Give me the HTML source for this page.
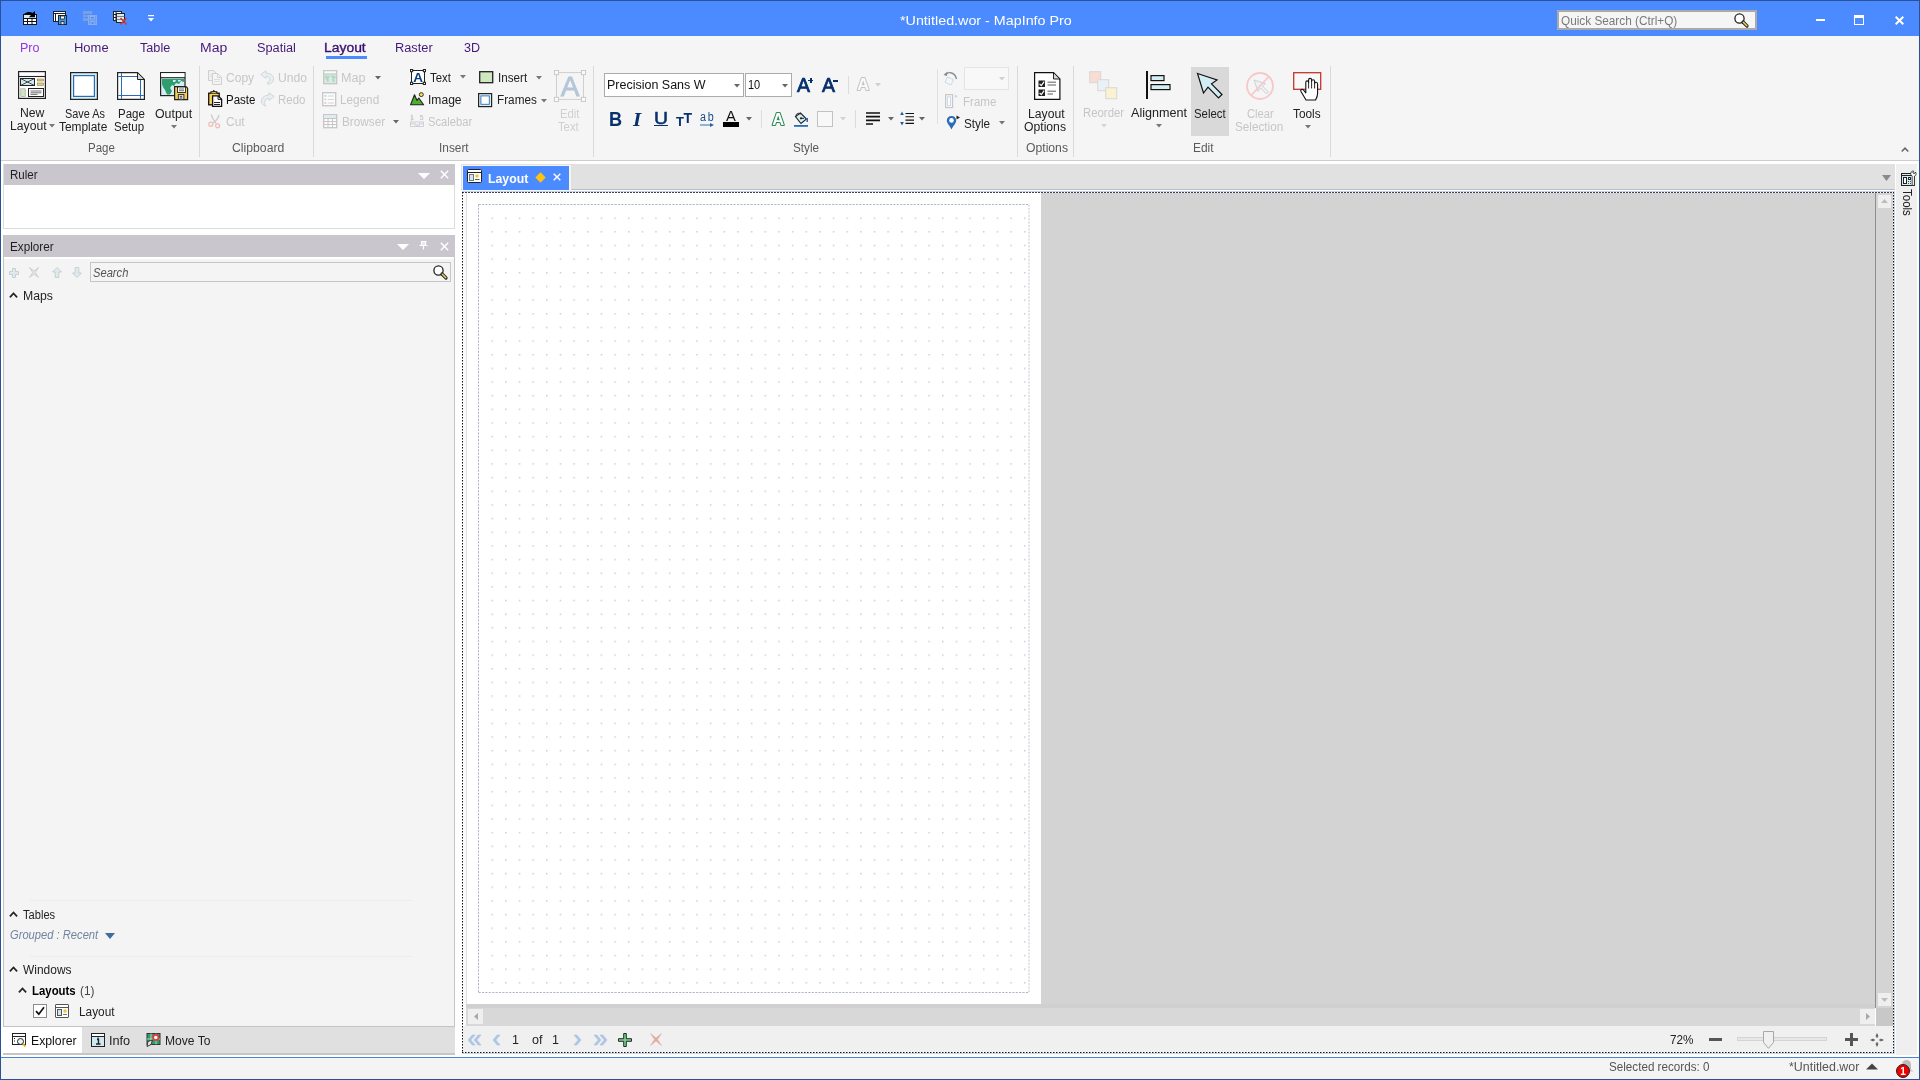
<!DOCTYPE html>
<html><head><meta charset="utf-8"><title>MapInfo Pro</title>
<style>
html,body{margin:0;padding:0;}
body{width:1920px;height:1080px;position:relative;overflow:hidden;background:#fff;font-family:"Liberation Sans",sans-serif;}
#app div,#app span,#app svg{position:absolute;}
#app{position:absolute;left:0;top:0;width:1920px;height:1080px;overflow:hidden;will-change:transform;}
.t{white-space:nowrap;line-height:1;transform-origin:0 0;}
svg{overflow:visible;}
</style></head><body><div id="app">
<div style="left:0px;top:0px;width:1920px;height:1080px;background:#28529a;"></div>
<div style="left:1px;top:1px;width:1918px;height:1078px;background:#ffffff;"></div>
<div style="left:1px;top:1px;width:1918px;height:35px;background:#4c8bff;"></div>
<div style="left:1px;top:36px;width:1918px;height:124px;background:#f5f5f5;"></div>
<div style="left:1px;top:160px;width:1918px;height:1px;background:#cdcdcd;"></div>
<div style="left:1px;top:1057px;width:1918px;height:1px;background:#4a82d4;"></div>
<div style="left:1px;top:1058px;width:1918px;height:21px;background:#f4f4f4;"></div>
<span class="t" style="left:900.29px;top:13.80px;font-size:13px;color:#ffffff;transform:scaleX(1.1007);">*Untitled.wor - MapInfo Pro</span>
<div style="left:1557px;top:10px;width:200px;height:20px;background:#a9a9a9;"></div>
<div style="left:1559px;top:12px;width:196px;height:16px;background:#f5f5f5;"></div>
<span class="t" style="left:1561.47px;top:14.92px;font-size:12.5px;color:#7a7a7a;transform:scaleX(0.9426);">Quick Search (Ctrl+Q)</span>
<div style="left:1816px;top:19px;width:9px;height:2px;background:#ffffff;"></div>
<div style="left:1854px;top:15px;width:10px;height:10px;background:#ffffff;"></div>
<div style="left:1855px;top:18px;width:8px;height:6px;background:#4c8bff;"></div>
<svg style="left:1895px;top:16px;" width="9" height="9" viewBox="0 0 9 9"><path d="M0.7 0.7L8.3 8.3M8.3 0.7L0.7 8.3" stroke="#fff" stroke-width="2" fill="none"/></svg>
<span class="t" style="left:1608.98px;top:1061.42px;font-size:12.5px;color:#555;transform:scaleX(0.9326);">Selected records: 0</span>
<span class="t" style="left:1788.81px;top:1061.42px;font-size:12.5px;color:#555;transform:scaleX(0.9929);">*Untitled.wor</span>
<svg style="left:1866px;top:1063px;" width="12" height="7" viewBox="0 0 12 7"><path d="M0 6.5L6 0.5L12 6.5Z" fill="#444"/></svg>
<svg style="left:1894px;top:1060px;" width="20" height="19" viewBox="0 0 20 19"><path d="M8 9V4.5A4.5 4.5 0 0 1 17 4.5V9Z" fill="#bcbcbc"/><path d="M16 8.5L19.5 11.5H15Z" fill="#c4c4c4"/><circle cx="9" cy="11" r="6.5" fill="#ee0000" stroke="#222" stroke-width="1"/><text x="9" y="15" font-size="10" font-weight="700" fill="#fff" text-anchor="middle" font-family="Liberation Sans">1</text></svg>
<span class="t" style="left:19.50px;top:42.42px;font-size:12.5px;color:#9236e0;transform:scaleX(1.0035);">Pro</span>
<span class="t" style="left:74.46px;top:42.42px;font-size:12.5px;color:#45177c;transform:scaleX(1.0373);">Home</span>
<span class="t" style="left:139.75px;top:42.42px;font-size:12.5px;color:#45177c;transform:scaleX(1.0129);">Table</span>
<span class="t" style="left:200.38px;top:42.42px;font-size:12.5px;color:#45177c;transform:scaleX(1.1178);">Map</span>
<span class="t" style="left:257.43px;top:42.42px;font-size:12.5px;color:#45177c;transform:scaleX(1.0187);">Spatial</span>
<span class="t" style="left:324.39px;top:42.42px;font-size:12.5px;color:#3a0f70;transform:scaleX(1.1115);-webkit-text-stroke:0.35px #3a0f70;">Layout</span>
<div style="left:326px;top:56px;width:41px;height:3px;background:#4c8bff;"></div>
<span class="t" style="left:395.48px;top:42.42px;font-size:12.5px;color:#45177c;transform:scaleX(1.0246);">Raster</span>
<span class="t" style="left:464.06px;top:42.42px;font-size:12.5px;color:#45177c;transform:scaleX(1.0042);">3D</span>
<svg style="left:23px;top:11px;" width="15" height="15" viewBox="0 0 15 15"><rect x="0.5" y="3.5" width="13" height="10" fill="#fff" stroke="#111"/><rect x="1" y="4" width="12" height="3" fill="#d4ecf4"/><path d="M0.5 7.5H13.5M0.5 10.5H13.5M4.5 7.5V13.5M9 7.5V13.5" stroke="#111"/><path d="M1.5 2.6C4 0.6 7.5 0.4 9.6 2L12 0V6.3H5.8L7.8 4.3C6 3 3.8 2.6 1.5 3.4Z" fill="#000"/></svg>
<svg style="left:53px;top:11px;" width="15" height="15" viewBox="0 0 15 15"><rect x="0.5" y="0.5" width="12" height="10" fill="#fff" stroke="#222"/><path d="M0.5 2.5H12.5" stroke="#222"/><rect x="2.5" y="2.5" width="10" height="8" fill="#fff" stroke="#222"/><rect x="5.5" y="4.5" width="8" height="9" fill="#38a0f0" stroke="#222"/><rect x="7.5" y="5" width="4" height="3" fill="#fff" stroke="#222" stroke-width="0.8"/><rect x="8" y="10.5" width="3" height="3" fill="#e8e8e8" stroke="#222" stroke-width="0.8"/></svg>
<svg style="left:83px;top:11px;" width="15" height="15" viewBox="0 0 15 15"><g opacity="0.75"><rect x="0.5" y="0.5" width="8" height="9" fill="#7fa8e8" stroke="#88a8e0"/><path d="M0.5 3.5H8.5M0.5 6.5H8.5" stroke="#5a8ae0"/><rect x="5.5" y="4.5" width="8" height="9" fill="#78a4ec" stroke="#9ab8ec"/><rect x="7.5" y="5.5" width="4" height="2.5" fill="#5a8ae0" stroke="#a8c4f0" stroke-width="0.8"/><rect x="8" y="10.5" width="3" height="3" fill="#5a8ae0" stroke="#a8c4f0" stroke-width="0.8"/></g></svg>
<svg style="left:113px;top:11px;" width="15" height="15" viewBox="0 0 15 15"><rect x="0.5" y="0.5" width="8" height="9" fill="#fff" stroke="#222"/><path d="M0.5 3.5H8.5M0.5 6.5H8.5M3 0.5V9.5" stroke="#222"/><rect x="3.5" y="2.5" width="8" height="9" fill="#d8ecf4" stroke="#222"/><path d="M3.5 5.5H11.5M3.5 8.5H11.5" stroke="#666" stroke-width="0.8"/><path d="M7.5 7L13.5 13.5M13.5 7L7.5 13.5" stroke="#cc3a30" stroke-width="1.5"/></svg>
<svg style="left:147.5px;top:15px;" width="6" height="7" viewBox="0 0 6 7"><rect x="0" y="0" width="6" height="1.2" fill="#fff"/><path d="M0 3H6L3 6.5Z" fill="#fff"/></svg>
<svg style="left:18px;top:71px;" width="28" height="28" viewBox="0 0 28 28"><rect x="0.6" y="0.6" width="26.8" height="26.8" fill="#fff" stroke="#222" stroke-width="1.2"/><path d="M0.6 5.5H27.4" stroke="#222" stroke-width="1.1"/><rect x="2.5" y="7.5" width="14" height="7" fill="#cfeaf2" stroke="#222" stroke-width="1"/><path d="M2.5 7.5L16.5 14.5M16.5 7.5L2.5 14.5" stroke="#222" stroke-width="0.8"/><rect x="19.5" y="8" width="6" height="2" fill="#f4cf50" stroke="#666" stroke-width="0.5"/><rect x="19.5" y="12" width="6" height="2.4" fill="#f4cf50" stroke="#666" stroke-width="0.5"/><rect x="2.8" y="17.8" width="4.4" height="7.6" fill="#d0e8c0" stroke="#999" stroke-width="0.6"/><rect x="10.5" y="17.5" width="15" height="8" fill="#fff" stroke="#222" stroke-width="1"/><path d="M12.5 20H23.5M12.5 21.8H23.5M12.5 23.4H19.5" stroke="#333" stroke-width="0.7"/></svg>
<span class="t" style="left:19.52px;top:107.42px;font-size:12.5px;color:#222;transform:scaleX(0.9766);">New</span>
<span class="t" style="left:9.53px;top:120.42px;font-size:12.5px;color:#222;transform:scaleX(0.9743);">Layout</span>
<svg style="left:49px;top:124px;" width="6" height="3.4" viewBox="0 0 6 3.4"><path d="M0 0H6L3 3.4Z" fill="#777"/></svg>
<svg style="left:70px;top:72px;" width="28" height="28" viewBox="0 0 28 28"><rect x="0.6" y="0.6" width="26.8" height="26.8" fill="#d6eef6" stroke="#222" stroke-width="1.2"/><rect x="3.6" y="3.6" width="20.8" height="20.8" fill="#fff" stroke="#2a6cb8" stroke-width="1.2"/></svg>
<span class="t" style="left:64.51px;top:108.42px;font-size:12.5px;color:#222;transform:scaleX(0.8691);">Save As</span>
<span class="t" style="left:59.26px;top:121.42px;font-size:12.5px;color:#222;transform:scaleX(0.9512);">Template</span>
<svg style="left:117px;top:72px;" width="28" height="28" viewBox="0 0 28 28"><path d="M0.6 0.6H20.5L27.4 7.5V27.4H0.6Z" fill="#fff" stroke="#222" stroke-width="1.2"/><path d="M20.5 0.6V7.5H27.4Z" fill="#d8d8d8" stroke="#222" stroke-width="1"/><path d="M4.5 1.2V26.8M23.5 8V26.8M1.2 4.5H20M1.2 23.5H26.8" stroke="#2a6cb8" stroke-width="1"/></svg>
<span class="t" style="left:117.58px;top:108.42px;font-size:12.5px;color:#222;transform:scaleX(0.9210);">Page</span>
<span class="t" style="left:113.98px;top:121.42px;font-size:12.5px;color:#222;transform:scaleX(0.9188);">Setup</span>
<svg style="left:160px;top:72px;" width="29" height="29" viewBox="0 0 29 29"><rect x="0.6" y="0.6" width="24.4" height="23" fill="#d4ecf2" stroke="#222" stroke-width="1.2"/><rect x="1.2" y="1.2" width="23.2" height="4" fill="#fff"/><path d="M0.6 5.7H25" stroke="#222" stroke-width="1.1"/><path d="M2 7H24V10L21 9L19 12L16 11L14 14L12 13L10 16L12 19L10 22.5H7L5 18L3 15L2 12Z" fill="#2e9e6e"/><path d="M13 8L16 8L15 10L13 10ZM18 8H21L20 9.5H18Z" fill="#d4ecf2"/><path d="M14.6 14.6H26L27.6 16.2V27.6H14.6Z" fill="#f4cf50" stroke="#222" stroke-width="1.2"/><rect x="17.5" y="15" width="8" height="5.5" fill="#fff" stroke="#222" stroke-width="0.9"/><path d="M19 17H24M19 18.7H24" stroke="#333" stroke-width="0.7"/><rect x="18.3" y="22.6" width="5.6" height="5" fill="#e8e8e8" stroke="#222" stroke-width="0.9"/><rect x="20.2" y="24.2" width="1.6" height="3.4" fill="#fff" stroke="#222" stroke-width="0.6"/></svg>
<span class="t" style="left:154.94px;top:108.42px;font-size:12.5px;color:#222;transform:scaleX(0.9898);">Output</span>
<svg style="left:171px;top:125px;" width="6" height="3.4" viewBox="0 0 6 3.4"><path d="M0 0H6L3 3.4Z" fill="#777"/></svg>
<span class="t" style="left:87.58px;top:141.92px;font-size:12.5px;color:#5a5a5a;transform:scaleX(0.9210);">Page</span>
<div style="left:199px;top:66px;width:1px;height:91px;background:#dadada;"></div>
<svg style="left:208px;top:70px;" width="15" height="15" viewBox="0 0 15 15"><g><path d="M0.5 0.5H5.5L8.5 3.5V10.5H0.5Z" fill="#f0f0f0" stroke="#cfcfcf"/><path d="M4.5 3.5H9.5L13.5 7.5V14.5H4.5Z" fill="#f4f4f4" stroke="#cfcfcf"/><g shape-rendering="crispEdges"><rect x="6" y="9" width="6" height="1" fill="#dedede"/><rect x="6" y="11" width="6" height="1" fill="#dedede"/><rect x="2" y="4" width="2" height="1" fill="#dedede"/><rect x="2" y="6" width="2" height="1" fill="#dedede"/></g><path d="M9.5 3.5V7.5H13.5" fill="none" stroke="#cfcfcf" stroke-width="0.8"/></g></svg>
<span class="t" style="left:225.90px;top:71.92px;font-size:12.5px;color:#c6c6c6;transform:scaleX(0.9628);">Copy</span>
<svg style="left:260px;top:70px;" width="15" height="15" viewBox="0 0 15 15"><path d="M0.8 4.5L6 0.8V3.2C11 3.2 14 6 13.5 10C13 12.5 10.5 14 7.5 14.2V12.5C10 11.5 10.5 9.5 9.5 8C8.8 6.8 7.5 6.3 6 6.3V8.5Z" fill="#e6f0f2" stroke="#cfd2d2" stroke-width="0.9"/></svg>
<span class="t" style="left:278.09px;top:71.92px;font-size:12.5px;color:#c6c6c6;transform:scaleX(0.9670);">Undo</span>
<svg style="left:208px;top:90px;" width="15" height="17" viewBox="0 0 15 17"><rect x="0.7" y="3.2" width="10.5" height="11.6" fill="#f4d35e" stroke="#111" stroke-width="1.3"/><path d="M3 3.2V1.8H5L5.8 0.6L6.8 1.8H8.8V3.2" fill="#f4d35e" stroke="#111" stroke-width="1.1"/><path d="M4.6 5.8H10.2L13.6 9.2V16.3H4.6Z" fill="#fff" stroke="#111" stroke-width="1.3"/><path d="M10 6V9.4H13.4" fill="none" stroke="#111" stroke-width="0.9"/><g shape-rendering="crispEdges"><rect x="6" y="12" width="6" height="1" fill="#222"/><rect x="6" y="14" width="6" height="1" fill="#222"/></g></svg>
<span class="t" style="left:225.58px;top:93.92px;font-size:12.5px;color:#111;transform:scaleX(0.9199);">Paste</span>
<svg style="left:260px;top:92px;" width="15" height="15" viewBox="0 0 15 15"><path d="M14.2 4.5L9 0.8V3.2C4 3.2 1 6 1.5 10C2 12.5 4.5 14 6 14.2L5 12.5C4.2 11.2 4.5 9.5 5.5 8C6.2 6.8 7.5 6.3 9 6.3V8.5Z" fill="#e6f0f2" stroke="#cfd2d2" stroke-width="0.9"/></svg>
<span class="t" style="left:278.08px;top:93.92px;font-size:12.5px;color:#c6c6c6;transform:scaleX(0.9163);">Redo</span>
<svg style="left:208px;top:114px;" width="13" height="15" viewBox="0 0 13 15"><path d="M3.2 0.5C4 4 6 7 8.2 9.6M11 1C10.2 4 8 7.5 4.6 9" stroke="#cdcdcd" stroke-width="1.3" fill="none"/><circle cx="2.8" cy="10.2" r="2" fill="#fbf3f3" stroke="#f0baba" stroke-width="1.2"/><circle cx="9.6" cy="11.8" r="2" fill="#fbf3f3" stroke="#f0baba" stroke-width="1.2"/></svg>
<span class="t" style="left:226.40px;top:116.42px;font-size:12.5px;color:#c6c6c6;transform:scaleX(0.9600);">Cut</span>
<span class="t" style="left:231.89px;top:141.92px;font-size:12.5px;color:#5a5a5a;transform:scaleX(0.9784);">Clipboard</span>
<div style="left:313px;top:66px;width:1px;height:91px;background:#dadada;"></div>
<svg style="left:323px;top:70px;" width="15" height="15" viewBox="0 0 15 15"><rect x="0.7" y="0.7" width="13" height="13" fill="#d8ece2" stroke="#c6c6c6" stroke-width="1.3"/><rect x="1.4" y="1.4" width="11.6" height="2" fill="#fafafa"/><path d="M0.7 4H13.7" stroke="#c6c6c6"/><path d="M2 5.5H6L7 7L5.5 8.5L6 11L4.5 12.5L3.5 10L2 8Z M7.5 5.5H12.5V8L11 9.5L12 11.5L10.5 12.5L9 10L9.5 8L8 7Z" fill="#b4d8c4"/></svg>
<span class="t" style="left:341.49px;top:71.92px;font-size:12.5px;color:#c6c6c6;transform:scaleX(1.0082);">Map</span>
<svg style="left:374.5px;top:76px;" width="6" height="3.4" viewBox="0 0 6 3.4"><path d="M0 0H6L3 3.4Z" fill="#666"/></svg>
<svg style="left:322px;top:92px;" width="15" height="15" viewBox="0 0 15 15"><rect x="0.7" y="0.7" width="13" height="13" fill="#fcfcfc" stroke="#c6c6c6" stroke-width="1.3"/><rect x="2.5" y="3" width="1.8" height="1.8" fill="#b8d4f4"/><rect x="2.5" y="6.5" width="1.8" height="1.8" fill="#b8e0c8"/><rect x="2.5" y="10" width="1.8" height="1.8" fill="#f4c0c0"/><path d="M5.8 4H12M5.8 7.5H12M5.8 11H12" stroke="#d0d0d0" stroke-width="0.9"/></svg>
<span class="t" style="left:340.06px;top:93.92px;font-size:12.5px;color:#c6c6c6;transform:scaleX(0.9390);">Legend</span>
<svg style="left:323px;top:114px;" width="15" height="15" viewBox="0 0 15 15"><rect x="0.7" y="0.7" width="13" height="13" fill="#fcfcfc" stroke="#c6c6c6" stroke-width="1.3"/><rect x="1.4" y="1.6" width="11.6" height="2.6" fill="#dcecf0"/><path d="M0.7 4.5H13.7M0.7 7.5H13.7M0.7 10.5H13.7M5 4.5V13.7M9.5 4.5V13.7" stroke="#c6c6c6" stroke-width="1"/></svg>
<span class="t" style="left:341.56px;top:116.42px;font-size:12.5px;color:#c6c6c6;transform:scaleX(0.9399);">Browser</span>
<svg style="left:393px;top:120px;" width="6" height="3.4" viewBox="0 0 6 3.4"><path d="M0 0H6L3 3.4Z" fill="#666"/></svg>
<svg style="left:410px;top:69px;" width="17" height="17" viewBox="0 0 17 17"><rect x="1.5" y="1.5" width="13" height="13" fill="#fff" stroke="#222" stroke-width="1"/><g fill="#fff" stroke="#222" stroke-width="1"><rect x="0.5" y="0.5" width="2.2" height="2.2"/><rect x="13.3" y="0.5" width="2.2" height="2.2"/><rect x="0.5" y="13.3" width="2.2" height="2.2"/><rect x="13.3" y="13.3" width="2.2" height="2.2"/></g><text x="8" y="13.2" font-size="13.5" font-weight="700" font-family="Liberation Sans" fill="#0a3a80" text-anchor="middle">A</text></svg>
<span class="t" style="left:430.27px;top:71.92px;font-size:12.5px;color:#222;transform:scaleX(0.9086);">Text</span>
<svg style="left:460px;top:75px;" width="6" height="3.4" viewBox="0 0 6 3.4"><path d="M0 0H6L3 3.4Z" fill="#777"/></svg>
<svg style="left:410px;top:92px;" width="15" height="14" viewBox="0 0 15 14"><path d="M0.6 12.8L4.5 2.8L7 8.5L8.8 6L13.6 12.8Z" fill="#4caf2e" stroke="#222" stroke-width="1.1" stroke-linejoin="round"/><circle cx="11.3" cy="2.6" r="2" fill="#f8e04c" stroke="#222" stroke-width="0.9"/></svg>
<span class="t" style="left:427.91px;top:93.92px;font-size:12.5px;color:#222;transform:scaleX(0.9660);">Image</span>
<svg style="left:410px;top:114px;" width="15" height="14" viewBox="0 0 15 14"><text x="0" y="6" font-size="7.5" font-family="Liberation Sans" fill="#bdbdbd">1</text><text x="9.5" y="6" font-size="7.5" font-family="Liberation Sans" fill="#bdbdbd">5</text><path d="M1.5 0.5V7" stroke="#d4d4d4"/><rect x="0.5" y="8" width="13" height="4.5" fill="#fcfcfc" stroke="#d0d0d0"/><path d="M0.5 10.2H13.5M5 8V12.5M9.5 8V12.5" stroke="#d0d0d0" stroke-width="0.8"/><rect x="1" y="8.5" width="3.5" height="1.4" fill="#cfe0f4"/><rect x="5.5" y="10.6" width="3.5" height="1.4" fill="#cfe0f4"/><rect x="10" y="8.5" width="3" height="1.4" fill="#cfe0f4"/></svg>
<span class="t" style="left:428.00px;top:116.42px;font-size:12.5px;color:#c6c6c6;transform:scaleX(0.8946);">Scalebar</span>
<svg style="left:479px;top:71px;" width="15" height="13" viewBox="0 0 15 13"><rect x="0.7" y="0.7" width="13" height="11" fill="#d0e8c0" stroke="#222" stroke-width="1.3"/></svg>
<span class="t" style="left:497.95px;top:71.92px;font-size:12.5px;color:#222;transform:scaleX(0.9314);">Insert</span>
<svg style="left:536px;top:76px;" width="6" height="3.4" viewBox="0 0 6 3.4"><path d="M0 0H6L3 3.4Z" fill="#777"/></svg>
<svg style="left:478px;top:93px;" width="15" height="15" viewBox="0 0 15 15"><rect x="0.6" y="0.6" width="13" height="13" fill="#dceff6" stroke="#222" stroke-width="1.2"/><rect x="2.9" y="2.9" width="8.4" height="8.4" fill="#fff" stroke="#2a6cb8" stroke-width="0.9"/></svg>
<span class="t" style="left:497.06px;top:93.92px;font-size:12.5px;color:#222;transform:scaleX(0.9405);">Frames</span>
<svg style="left:541px;top:99px;" width="6" height="3.4" viewBox="0 0 6 3.4"><path d="M0 0H6L3 3.4Z" fill="#777"/></svg>
<svg style="left:554px;top:70px;" width="33" height="33" viewBox="0 0 33 33"><rect x="2.5" y="2.6" width="27" height="26.8" fill="none" stroke="#cfcfcf" stroke-width="1"/><g fill="#fafafa" stroke="#c6c6c6" stroke-width="0.9"><rect x="0.4" y="0.5" width="4.2" height="4.2"/><rect x="27.4" y="0.5" width="4.2" height="4.2"/><rect x="0.4" y="27.3" width="4.2" height="4.2"/><rect x="27.4" y="27.3" width="4.2" height="4.2"/></g><text x="16" y="25.8" font-size="28" font-family="Liberation Sans" fill="#b4c6d8" stroke="#b4c6d8" stroke-width="0.8" text-anchor="middle">A</text></svg>
<span class="t" style="left:559.59px;top:108.42px;font-size:12.5px;color:#d0d0d0;transform:scaleX(0.9052);">Edit</span>
<span class="t" style="left:558.28px;top:121.42px;font-size:12.5px;color:#d0d0d0;transform:scaleX(0.8997);">Text</span>
<span class="t" style="left:439.43px;top:141.92px;font-size:12.5px;color:#5a5a5a;transform:scaleX(0.9480);">Insert</span>
<div style="left:593px;top:66px;width:1px;height:91px;background:#dadada;"></div>
<div style="left:604px;top:73px;width:140px;height:24px;background:#ababab;"></div>
<div style="left:605px;top:74px;width:138px;height:22px;background:#fff;"></div>
<span class="t" style="left:606.50px;top:78.92px;font-size:12.5px;color:#111;transform:scaleX(0.9987);">Precision Sans W</span>
<svg style="left:734px;top:84px;" width="6" height="3.4" viewBox="0 0 6 3.4"><path d="M0 0H6L3 3.4Z" fill="#666"/></svg>
<div style="left:745px;top:73px;width:47px;height:24px;background:#ababab;"></div>
<div style="left:746px;top:74px;width:45px;height:22px;background:#fff;"></div>
<span class="t" style="left:748.17px;top:78.92px;font-size:12.5px;color:#111;transform:scaleX(0.8800);">10</span>
<svg style="left:782px;top:84px;" width="6" height="3.4" viewBox="0 0 6 3.4"><path d="M0 0H6L3 3.4Z" fill="#666"/></svg>
<span class="t" style="left:797px;top:75.89px;font-size:19.5px;color:#07306e;-webkit-text-stroke:0.7px #07306e;">A</span>
<div style="left:808px;top:79.6px;width:5.4px;height:1.7px;background:#07306e;"></div>
<div style="left:809.9px;top:77.7px;width:1.7px;height:5.5px;background:#07306e;"></div>
<span class="t" style="left:822px;top:75.89px;font-size:19.5px;color:#07306e;-webkit-text-stroke:0.7px #07306e;">A</span>
<div style="left:833px;top:80px;width:5.2px;height:1.7px;background:#07306e;"></div>
<div style="left:848px;top:76px;width:1px;height:18px;background:#dcdcdc;"></div>
<svg style="left:855px;top:76px;" width="17" height="17" viewBox="0 0 17 17"><text x="8.3" y="14.3" font-size="16.5" font-weight="700" font-family="Liberation Sans" text-anchor="middle" fill="#fafafa" stroke="#c2c2c2" stroke-width="2" paint-order="stroke" stroke-linejoin="round">A</text></svg>
<svg style="left:875px;top:83px;" width="6" height="3.4" viewBox="0 0 6 3.4"><path d="M0 0H6L3 3.4Z" fill="#cfcfcf"/></svg>
<span class="t" style="left:608.5px;top:110.49px;font-size:19.5px;color:#07306e;font-weight:700;transform:scaleX(0.93);">B</span>
<span class="t" style="left:633.4px;top:110.49px;font-size:19.5px;color:#07306e;font-weight:700;font-style:italic;font-family:'Liberation Serif',serif;transform:scaleX(1.08);">I</span>
<span class="t" style="left:653.5px;top:110.21px;font-size:17px;color:#07306e;transform:scaleX(1.14);-webkit-text-stroke:0.5px #07306e;">U</span>
<div style="left:654px;top:124.5px;width:14px;height:1.7px;background:#07306e;"></div>
<span class="t" style="left:676px;top:115.00px;font-size:13px;color:#07306e;font-weight:700;">T</span>
<span class="t" style="left:683.6px;top:110.75px;font-size:14px;color:#07306e;font-weight:700;">T</span>
<span class="t" style="left:699.8px;top:110.72px;font-size:12.5px;color:#184a8c;letter-spacing:2px;transform:scaleX(0.86);">ab</span>
<svg style="left:700px;top:122.5px;" width="14" height="4" viewBox="0 0 14 4"><path d="M0 2H11" stroke="#2463a8" stroke-width="0.9"/><path d="M10 0L14 2L10 4Z" fill="#2463a8"/></svg>
<span class="t" style="left:725.5px;top:107.88px;font-size:15.5px;color:#111;transform:scaleX(0.95);">A</span>
<div style="left:723px;top:122px;width:16px;height:5px;background:#000;"></div>
<svg style="left:746px;top:117px;" width="6" height="3.4" viewBox="0 0 6 3.4"><path d="M0 0H6L3 3.4Z" fill="#666"/></svg>
<div style="left:761px;top:110px;width:1px;height:18px;background:#dcdcdc;"></div>
<svg style="left:770px;top:111px;" width="17" height="17" viewBox="0 0 17 17"><text x="8.2" y="14.1" font-size="16.5" font-weight="700" font-family="Liberation Sans" text-anchor="middle" fill="#fff" stroke="#2e8b57" stroke-width="2.2" paint-order="stroke" stroke-linejoin="round">A</text></svg>
<svg style="left:794px;top:112px;" width="15" height="15" viewBox="0 0 15 15"><path d="M1.5 4.5L6.5 1L12.5 7L7 11.5Z" fill="#d6eef6" stroke="#222" stroke-width="1.1"/><path d="M2 3.5C2 1.5 5 0.5 6.5 2" fill="none" stroke="#222" stroke-width="1"/><circle cx="7" cy="6.3" r="1.1" fill="#222"/><path d="M7 6.3H10" stroke="#222"/><path d="M12.5 6V10H14V6Z" fill="#2a6cb8"/><rect x="0" y="13" width="14" height="1.8" fill="#2a6cb8"/></svg>
<div style="left:817px;top:111px;width:16px;height:16px;background:#c2c2c2;"></div>
<div style="left:818px;top:112px;width:14px;height:14px;background:#f8f8f8;"></div>
<svg style="left:840px;top:117px;" width="6" height="3.4" viewBox="0 0 6 3.4"><path d="M0 0H6L3 3.4Z" fill="#d2d2d2"/></svg>
<div style="left:855px;top:110px;width:1px;height:18px;background:#dcdcdc;"></div>
<svg style="left:866px;top:112px;" width="15" height="15" viewBox="0 0 15 15"><path d="M0 1H14M0 4.7H14M0 8.3H14M0 12H7" stroke="#111" stroke-width="1.7"/></svg>
<svg style="left:888px;top:117px;" width="6" height="3.4" viewBox="0 0 6 3.4"><path d="M0 0H6L3 3.4Z" fill="#666"/></svg>
<svg style="left:900px;top:111px;" width="15" height="15" viewBox="0 0 15 15"><path d="M5.5 2.5H14M5.5 5.8H14M5.5 9.1H14M5.5 12.4H14" stroke="#111" stroke-width="1.1"/><path d="M2 0.5L3.8 4H0.2Z" fill="#1e5a9e"/><path d="M2 14.5L3.8 11H0.2Z" fill="#1e5a9e"/></svg>
<svg style="left:919px;top:117px;" width="6" height="3.4" viewBox="0 0 6 3.4"><path d="M0 0H6L3 3.4Z" fill="#666"/></svg>
<span class="t" style="left:793.47px;top:141.92px;font-size:12.5px;color:#5a5a5a;transform:scaleX(0.9368);">Style</span>
<div style="left:937px;top:69px;width:1px;height:55px;background:#e0e0e0;"></div>
<svg style="left:943px;top:70px;" width="15" height="16" viewBox="0 0 15 16"><path d="M2 4.5C6 1 12 2.5 13.5 9" fill="none" stroke="#8c8c8c" stroke-width="1.4"/><path d="M0.5 5L4.5 1.5L4 6Z" fill="#8c8c8c"/><path d="M4.5 7L10.5 9.5L8 15L2 12.2Z" fill="none" stroke="#a8c8e8" stroke-width="0.9" stroke-dasharray="1.4 0.8"/></svg>
<div style="left:964px;top:67px;width:45px;height:23px;background:#e4e4e4;"></div>
<div style="left:965px;top:68px;width:43px;height:21px;background:#f8f8f8;"></div>
<svg style="left:999px;top:77px;" width="6" height="3.4" viewBox="0 0 6 3.4"><path d="M0 0H6L3 3.4Z" fill="#d0d0d0"/></svg>
<svg style="left:945px;top:94px;" width="13" height="15" viewBox="0 0 13 15"><rect x="0.6" y="0.6" width="7" height="13" fill="#f4f4f4" stroke="#c8c8c8" stroke-width="1.2"/><rect x="2.6" y="2.8" width="3" height="8.6" fill="#fafcff" stroke="#c0d4ea" stroke-width="0.8"/><path d="M10 0.5V4L13 2.2Z" fill="#c4d8ee"/></svg>
<span class="t" style="left:963.08px;top:95.92px;font-size:12.5px;color:#c6c6c6;transform:scaleX(0.9242);">Frame</span>
<svg style="left:946px;top:115px;" width="14" height="16" viewBox="0 0 14 16"><path d="M5.5 1C8.2 1 10.2 3 10.2 5.6C10.2 8.5 7 11 5.5 14.5C4 11 0.8 8.5 0.8 5.6C0.8 3 2.8 1 5.5 1Z" fill="#2a6cb8"/><circle cx="5.5" cy="5.4" r="2.3" fill="#fff"/><path d="M10.5 0.5V4.5L14 2.5Z" fill="#222"/></svg>
<span class="t" style="left:964.47px;top:118.22px;font-size:12.5px;color:#222;transform:scaleX(0.9368);">Style</span>
<svg style="left:999px;top:121px;" width="6" height="3.4" viewBox="0 0 6 3.4"><path d="M0 0H6L3 3.4Z" fill="#777"/></svg>
<div style="left:1017px;top:66px;width:1px;height:91px;background:#dadada;"></div>
<svg style="left:1034px;top:72px;" width="27" height="29" viewBox="0 0 27 29"><path d="M0.6 0.6H19.5L25.9 7V27.4H0.6Z" fill="#fff" stroke="#111" stroke-width="1.2"/><path d="M19.5 0.6V7H25.9Z" fill="#d8d8d8" stroke="#111" stroke-width="0.9"/><rect x="4.5" y="8.5" width="6.5" height="6.5" fill="#222"/><rect x="4.5" y="17.5" width="6.5" height="6.5" fill="#222"/><path d="M5.6 11.8L7.3 13.6L10.2 9.6" stroke="#fff" stroke-width="1.2" fill="none"/><path d="M5.6 20.8L7.3 22.6L10.2 18.6" stroke="#fff" stroke-width="1.2" fill="none"/><path d="M13.5 10.2H22M13.5 13H22M13.5 19.2H22M13.5 22H19" stroke="#333" stroke-width="0.8"/></svg>
<span class="t" style="left:1027.53px;top:108.42px;font-size:12.5px;color:#222;transform:scaleX(0.9743);">Layout</span>
<span class="t" style="left:1024.45px;top:121.42px;font-size:12.5px;color:#222;transform:scaleX(0.9747);">Options</span>
<span class="t" style="left:1026.45px;top:141.92px;font-size:12.5px;color:#5a5a5a;transform:scaleX(0.9747);">Options</span>
<div style="left:1073px;top:66px;width:1px;height:91px;background:#dadada;"></div>
<svg style="left:1089px;top:71px;" width="29" height="29" viewBox="0 0 29 29"><rect x="0.7" y="0.7" width="11" height="11" fill="#fadcd2" stroke="#d8d8d8" stroke-width="1"/><rect x="8.7" y="8.7" width="11" height="11" fill="#e8f2f6" stroke="#d8d8d8" stroke-width="1"/><rect x="16.7" y="16.7" width="11" height="11" fill="#faf2d0" stroke="#d8d8d8" stroke-width="1"/></svg>
<span class="t" style="left:1083.09px;top:107.42px;font-size:12.5px;color:#c6c6c6;transform:scaleX(0.9091);">Reorder</span>
<svg style="left:1101px;top:124px;" width="6" height="3.4" viewBox="0 0 6 3.4"><path d="M0 0H6L3 3.4Z" fill="#d4d4d4"/></svg>
<svg style="left:1145px;top:71px;" width="28" height="29" viewBox="0 0 28 29"><path d="M2 0V28" stroke="#111" stroke-width="2"/><rect x="6" y="4.6" width="13" height="5" fill="#d4ecf4" stroke="#111" stroke-width="1.2"/><rect x="6" y="13.6" width="19" height="5" fill="#d4ecf4" stroke="#111" stroke-width="1.2"/></svg>
<span class="t" style="left:1131.00px;top:107.42px;font-size:12.5px;color:#222;transform:scaleX(1.0090);">Alignment</span>
<svg style="left:1156px;top:124px;" width="6" height="3.4" viewBox="0 0 6 3.4"><path d="M0 0H6L3 3.4Z" fill="#777"/></svg>
<div style="left:1191px;top:67px;width:38px;height:69px;background:#d9d9d9;"></div>
<svg style="left:1196px;top:72px;" width="28" height="28" viewBox="0 0 28 28"><path d="M1.5 1.5L21 8L15.5 11.8L26 22.5L22.5 26L12 15.2L7.5 21Z" fill="#d4ecf4" stroke="#111" stroke-width="1.2" stroke-linejoin="miter"/></svg>
<span class="t" style="left:1194.49px;top:108.42px;font-size:12.5px;color:#222;transform:scaleX(0.9101);">Select</span>
<svg style="left:1246px;top:72px;" width="29" height="29" viewBox="0 0 29 29"><path d="M8 8L19.5 11.5L16.5 14L22.5 20L20.5 22L14.5 16L12 19.5Z" fill="#ecf2f4" stroke="#d0d0d0" stroke-width="1"/><circle cx="14" cy="14" r="13" fill="none" stroke="#f8c8c8" stroke-width="1.8"/><path d="M5 23.5L23 4.5" stroke="#f8c8c8" stroke-width="1.8"/></svg>
<span class="t" style="left:1247.44px;top:108.42px;font-size:12.5px;color:#c6c6c6;transform:scaleX(0.8946);">Clear</span>
<span class="t" style="left:1234.97px;top:121.42px;font-size:12.5px;color:#c6c6c6;transform:scaleX(0.9377);">Selection</span>
<svg style="left:1293px;top:72px;" width="29" height="29" viewBox="0 0 29 29"><rect x="0.7" y="0.7" width="27" height="16.6" fill="#f8f8f8" stroke="#c03828" stroke-width="1.3"/><path d="M13 28L8 19.5C7 17.6 9 16.4 10.5 18L12.8 20.8V10.5C12.8 8.3 15.6 8.3 15.6 10.5V8C15.6 5.8 18.6 5.8 18.6 8V9.2C18.6 7.2 21.6 7.2 21.6 9.4V11.5C21.6 9.8 24.6 9.8 24.6 12V21.5C24.6 24 23.6 26 22.6 28Z" fill="#fff" stroke="#111" stroke-width="1.1" stroke-linejoin="round"/><path d="M15.6 10V16.5M18.6 9V16.5M21.6 11V16.5" stroke="#111" stroke-width="0.9"/></svg>
<span class="t" style="left:1292.76px;top:108.42px;font-size:12.5px;color:#222;transform:scaleX(0.9474);">Tools</span>
<svg style="left:1305px;top:125px;" width="6" height="3.4" viewBox="0 0 6 3.4"><path d="M0 0H6L3 3.4Z" fill="#777"/></svg>
<span class="t" style="left:1192.55px;top:141.92px;font-size:12.5px;color:#5a5a5a;transform:scaleX(0.9541);">Edit</span>
<div style="left:1330px;top:66px;width:1px;height:91px;background:#dadada;"></div>
<div style="left:3px;top:163.5px;width:452px;height:65.5px;background:#dcdcdc;"></div>
<div style="left:4px;top:163.5px;width:451px;height:21.5px;background:#c9c6cd;"></div>
<div style="left:4px;top:185px;width:450px;height:43px;background:#ffffff;"></div>
<span class="t" style="left:9.58px;top:169.42px;font-size:12.5px;color:#1e1e1e;transform:scaleX(0.9237);">Ruler</span>
<svg style="left:418px;top:173px;" width="12" height="6" viewBox="0 0 12 6"><path d="M0 0H12L6 6Z" fill="#fff"/></svg>
<svg style="left:440px;top:170px;" width="9" height="9" viewBox="0 0 9 9"><path d="M0.8 0.8L8.2 8.2M8.2 0.8L0.8 8.2" stroke="#fff" stroke-width="1.5" fill="none"/></svg>
<div style="left:3px;top:234.5px;width:452px;height:792.5px;background:#c4c4c4;"></div>
<div style="left:4px;top:234.5px;width:451px;height:22.5px;background:#c9c6cd;"></div>
<div style="left:4px;top:257px;width:450px;height:2px;background:#ffffff;"></div>
<div style="left:4px;top:259px;width:450px;height:767px;background:#f4f4f4;"></div>
<span class="t" style="left:9.56px;top:241.42px;font-size:12.5px;color:#1e1e1e;transform:scaleX(0.9366);">Explorer</span>
<svg style="left:397px;top:244px;" width="12" height="6" viewBox="0 0 12 6"><path d="M0 0H12L6 6Z" fill="#fff"/></svg>
<svg style="left:419px;top:241px;" width="9" height="9" viewBox="0 0 9 9"><path d="M2 0.5H7.5M2.5 0.5V4M6.5 0.5V4M0.5 4.5H8.5M4.5 4.5V8.5" stroke="#fff" stroke-width="1.2" fill="none"/><rect x="3" y="1" width="3" height="3" fill="#e8e8ee"/></svg>
<svg style="left:440px;top:242px;" width="9" height="9" viewBox="0 0 9 9"><path d="M0.8 0.8L8.2 8.2M8.2 0.8L0.8 8.2" stroke="#fff" stroke-width="1.5" fill="none"/></svg>
<svg style="left:9px;top:268px;" width="10" height="10" viewBox="0 0 10 10"><path d="M3.5 0.5H6.5V3.5H9.5V6.5H6.5V9.5H3.5V6.5H0.5V3.5H3.5Z" fill="#dfeaee" stroke="#c2c6c8" stroke-width="0.8"/></svg>
<svg style="left:29px;top:267px;" width="10" height="11" viewBox="0 0 10 11"><path d="M0.5 0.5L5 4L9.5 0.5L6.3 5.5L9.5 10.5L5 7L0.5 10.5L3.7 5.5Z" fill="#dfeaee" stroke="#c2c6c8" stroke-width="0.8"/></svg>
<svg style="left:52px;top:267px;" width="10" height="11" viewBox="0 0 10 11"><path d="M5 0.5L9.5 5H6.8V10.5H3.2V5H0.5Z" fill="#dfeaee" stroke="#c2c6c8" stroke-width="0.8"/></svg>
<svg style="left:72px;top:267px;" width="10" height="11" viewBox="0 0 10 11"><path d="M5 10.5L9.5 6H6.8V0.5H3.2V6H0.5Z" fill="#dfeaee" stroke="#c2c6c8" stroke-width="0.8"/></svg>
<div style="left:90px;top:262px;width:361px;height:20px;background:#c6c6c6;"></div>
<div style="left:91px;top:263px;width:359px;height:18px;background:#f4f4f4;"></div>
<span class="t" style="left:92.67px;top:267.42px;font-size:12.5px;color:#555;font-style:italic;transform:scaleX(0.8932);">Search</span>
<svg style="left:433px;top:265px;" width="15" height="15" viewBox="0 0 15 15"><circle cx="5.5" cy="5.5" r="4.6" fill="#fff" stroke="#222" stroke-width="1.3"/><path d="M9 9L13 13" stroke="#222" stroke-width="3.2" stroke-linecap="round"/><path d="M9.3 9.3L12.8 12.8" stroke="#f2d060" stroke-width="1.5" stroke-linecap="round"/></svg>
<svg style="left:1734px;top:13px;" width="15" height="15" viewBox="0 0 15 15"><circle cx="5.5" cy="5.5" r="4.6" fill="#fff" stroke="#222" stroke-width="1.3"/><path d="M9 9L13 13" stroke="#222" stroke-width="3.2" stroke-linecap="round"/><path d="M9.3 9.3L12.8 12.8" stroke="#f2d060" stroke-width="1.5" stroke-linecap="round"/></svg>
<svg style="left:8.5px;top:291.7px;" width="9" height="6" viewBox="0 0 9 6"><path d="M0.9 5.3L4.5 1.5L8.1 5.3" stroke="#222" stroke-width="1.7" fill="none"/></svg>
<span class="t" style="left:22.52px;top:290.42px;font-size:12.5px;color:#222;transform:scaleX(0.9785);">Maps</span>
<div style="left:30px;top:900px;width:382px;height:1px;background:#ececec;"></div>
<svg style="left:8.5px;top:911px;" width="9" height="6" viewBox="0 0 9 6"><path d="M0.9 5.3L4.5 1.5L8.1 5.3" stroke="#222" stroke-width="1.7" fill="none"/></svg>
<span class="t" style="left:23.28px;top:909.42px;font-size:12.5px;color:#222;transform:scaleX(0.8889);">Tables</span>
<span class="t" style="left:9.94px;top:929.42px;font-size:12.5px;color:#6f859f;font-style:italic;transform:scaleX(0.8934);">Grouped : Recent</span>
<svg style="left:105px;top:933px;" width="10" height="6" viewBox="0 0 10 6"><path d="M0 0H10L5 6Z" fill="#3d6d9a"/></svg>
<div style="left:30px;top:956px;width:382px;height:1px;background:#ececec;"></div>
<svg style="left:8.5px;top:966px;" width="9" height="6" viewBox="0 0 9 6"><path d="M0.9 5.3L4.5 1.5L8.1 5.3" stroke="#222" stroke-width="1.7" fill="none"/></svg>
<span class="t" style="left:23.44px;top:963.92px;font-size:12.5px;color:#222;transform:scaleX(0.9564);">Windows</span>
<svg style="left:17.5px;top:987px;" width="9" height="6" viewBox="0 0 9 6"><path d="M0.9 5.3L4.5 1.5L8.1 5.3" stroke="#222" stroke-width="1.7" fill="none"/></svg>
<span class="t" style="left:31.76px;top:985.42px;font-size:12.5px;color:#000;font-weight:700;transform:scaleX(0.9115);">Layouts</span>
<span class="t" style="left:80.29px;top:985.42px;font-size:12.5px;color:#444;transform:scaleX(0.9412);">(1)</span>
<div style="left:33px;top:1004px;width:14px;height:14px;background:#8c8c8c;"></div>
<div style="left:34px;top:1005px;width:12px;height:12px;background:#fff;"></div>
<svg style="left:35px;top:1006px;" width="10" height="10" viewBox="0 0 10 10"><path d="M1 5.2L3.8 8.2L9 1.2" stroke="#111" stroke-width="1.7" fill="none"/></svg>
<svg style="left:55px;top:1004px;" width="15" height="15" viewBox="0 0 15 15"><rect x="0.5" y="0.5" width="13" height="13" rx="0.5" fill="#fff" stroke="#555"/><path d="M0.5 3.5H13.5" stroke="#555"/><rect x="2.5" y="5.5" width="4" height="6" fill="#cde8f0" stroke="#555" stroke-width="1"/><rect x="8.5" y="5.5" width="3" height="3" fill="#f4c430"/><path d="M8 10.5H12" stroke="#777"/></svg>
<span class="t" style="left:78.55px;top:1006.42px;font-size:12.5px;color:#222;transform:scaleX(0.9468);">Layout</span>
<div style="left:4px;top:1027px;width:451px;height:26px;background:#e0e0e0;"></div>
<div style="left:3px;top:1053px;width:452px;height:2px;background:#c6c6c6;"></div>
<div style="left:1px;top:1027px;width:81px;height:26px;background:#ffffff;"></div>
<svg style="left:12px;top:1033px;" width="15" height="15" viewBox="0 0 15 15"><rect x="0.5" y="0.5" width="13" height="11" fill="#fff" stroke="#222"/><path d="M0.5 3.5H13.5" stroke="#222"/><rect x="2" y="5" width="1" height="1" fill="#222"/><rect x="2" y="7.5" width="1" height="1" fill="#222"/><circle cx="8.5" cy="8.5" r="3" fill="#e8f4f8" stroke="#222"/><path d="M10.8 10.8L13.5 13.5" stroke="#e0b030" stroke-width="1.8"/></svg>
<span class="t" style="left:30.52px;top:1034.92px;font-size:12.5px;color:#111;transform:scaleX(0.9807);">Explorer</span>
<svg style="left:91px;top:1033px;" width="15" height="15" viewBox="0 0 15 15"><rect x="0.5" y="0.5" width="13" height="13" fill="#cdeaf2" stroke="#222"/><rect x="1" y="1" width="12" height="2.5" fill="#fff"/><path d="M0.5 3.5H13.5" stroke="#222"/><path d="M6 6.5H7.5V11M5 11H9.5" stroke="#222" stroke-width="1.4" fill="none"/><rect x="6.3" y="4.6" width="1.6" height="1.2" fill="#222"/></svg>
<span class="t" style="left:109.36px;top:1034.92px;font-size:12.5px;color:#222;transform:scaleX(1.0163);">Info</span>
<svg style="left:145.5px;top:1033px;" width="15" height="15" viewBox="0 0 15 15"><rect x="1" y="0.5" width="13" height="11" fill="#2e9e6e" stroke="#333"/><path d="M5 0.5V11.5M10 0.5V11.5M1 6H14" stroke="#bfe8d0" stroke-width="0.8"/><circle cx="9.8" cy="4.5" r="2.6" fill="#fff" stroke="#e33" stroke-width="1.6"/><path d="M1 13.5L2 8.5L6.5 7L5 11.5Z" fill="#eee" stroke="#333" stroke-width="1"/></svg>
<span class="t" style="left:164.53px;top:1034.92px;font-size:12.5px;color:#222;transform:scaleX(0.9670);">Move To</span>
<div style="left:461px;top:163.5px;width:1434px;height:25.5px;background:#e1e1e1;"></div>
<div style="left:461px;top:189px;width:1434px;height:1px;background:#bdbdbd;"></div>
<div style="left:462px;top:165px;width:109px;height:26px;background:#f4f6fa;"></div>
<div style="left:463px;top:166px;width:106px;height:24px;background:#4c8bff;"></div>
<span class="t" style="left:487.90px;top:171.77px;font-size:13.5px;color:#ffffff;font-weight:700;transform:scaleX(0.9097);">Layout</span>
<svg style="left:540px;top:178px;" width="0" height="0" viewBox="0 0 0 0"></svg>
<svg style="left:535px;top:172.3px;" width="11" height="11" viewBox="0 0 11 11"><path d="M5.5 0.3L10.7 5.5L5.5 10.7L0.3 5.5Z" fill="#ffc20e"/></svg>
<svg style="left:552.5px;top:173px;" width="8" height="8" viewBox="0 0 8 8"><path d="M0.7 0.7L7.3 7.3M7.3 0.7L0.7 7.3" stroke="#fff" stroke-width="1.4" fill="none"/></svg>
<svg style="left:467px;top:169px;" width="15" height="14" viewBox="0 0 15 14"><rect x="0.5" y="0.5" width="14" height="13" rx="1" fill="#fff" stroke="#222"/><path d="M0.5 3.5H14.5" stroke="#222"/><rect x="2.5" y="5.5" width="4" height="6" fill="#cde8f0" stroke="#777" stroke-width="1"/><rect x="8.5" y="5.5" width="3" height="3" fill="#f4c430"/><path d="M8 10.5H12.5" stroke="#555"/></svg>
<svg style="left:1882px;top:175px;" width="9" height="6" viewBox="0 0 9 6"><path d="M0 0H9L4.5 6Z" fill="#8a8a8a"/></svg>
<div style="left:462px;top:191px;width:1433px;height:1px;background:#c5d6f0;"></div>
<div style="left:462px;top:192px;width:1432px;height:1px;background:linear-gradient(90deg,#3a4150 0,#3a4150 2px,rgba(0,0,0,0) 2px);background-size:3px 1px;"></div>
<div style="left:462px;top:1052px;width:1432px;height:1px;background:linear-gradient(90deg,#111 0,#111 1px,#858585 1px,#858585 2px,rgba(0,0,0,0) 2px);background-size:3px 1px;"></div>
<div style="left:462px;top:1053px;width:1433px;height:1px;background:#c5d6f0;"></div>
<div style="left:462px;top:192px;width:1px;height:861px;background:linear-gradient(180deg,#111 0,#111 1px,#858585 1px,#858585 2px,rgba(0,0,0,0) 2px);background-size:1px 3px;"></div>
<div style="left:1893px;top:192px;width:1px;height:861px;background:linear-gradient(180deg,#111 0,#111 1px,#858585 1px,#858585 2px,rgba(0,0,0,0) 2px);background-size:1px 3px;"></div>
<div style="left:1894px;top:192px;width:1px;height:861px;background:#c5d6f0;"></div>
<div style="left:463px;top:193px;width:1412px;height:815px;background:#d3d3d3;"></div>
<div style="left:463px;top:193px;width:3px;height:833px;background:#fafafa;"></div>
<div style="left:465.5px;top:193px;width:1.5px;height:815px;background:#dedede;"></div>
<div style="left:467px;top:193px;width:573.5px;height:811px;background:#ffffff;"></div>
<svg style="left:467px;top:193px;" width="574" height="811" viewBox="0 0 574 811"><defs><pattern id="gd" x="10.75" y="10.75" width="13.655" height="13.655" patternUnits="userSpaceOnUse"><rect x="0" y="0" width="1.5" height="1.5" fill="#c9cdd9"/></pattern></defs><rect x="23.16" y="23.16" width="538.85" height="776.35" fill="url(#gd)"/><g fill="none" stroke="#a6b0c4" stroke-width="0.9" stroke-dasharray="2.2 1.2"><path d="M11.50 11.50H562.00"/><path d="M11.50 799.50H562.00"/><path d="M11.50 11.50V799.50"/><path d="M562.00 11.50V799.50" stroke="#b4bccc" stroke-width="0.8"/></g></svg>
<div style="left:1875px;top:193px;width:1px;height:815px;background:#8e8e8e;"></div>
<div style="left:1876px;top:193px;width:17px;height:815px;background:#d4d4d4;"></div>
<div style="left:1878px;top:195px;width:13px;height:13px;background:#efefef;"></div>
<svg style="left:1881px;top:199px;" width="7" height="4" viewBox="0 0 7 4"><path d="M0 4H7L3.5 0Z" fill="#bdbdbd"/></svg>
<div style="left:1878px;top:993px;width:13px;height:13px;background:#efefef;"></div>
<svg style="left:1881px;top:998px;" width="7" height="4" viewBox="0 0 7 4"><path d="M0 0H7L3.5 4Z" fill="#bdbdbd"/></svg>
<div style="left:466px;top:1008px;width:1409px;height:18px;background:#d8d8d8;"></div>
<div style="left:466px;top:1004px;width:1409px;height:4px;background:#d0d0d0;"></div>
<div style="left:467px;top:1004px;width:573.5px;height:0px;background:#fff;"></div>
<div style="left:1876px;top:1008px;width:17px;height:18px;background:#c8c8c8;"></div>
<div style="left:468px;top:1009px;width:15px;height:15px;background:#efefef;"></div>
<svg style="left:474px;top:1013px;" width="4" height="7" viewBox="0 0 4 7"><path d="M4 0V7L0 3.5Z" fill="#a8a8a8"/></svg>
<div style="left:1860px;top:1009px;width:15px;height:15px;background:#efefef;"></div>
<svg style="left:1866px;top:1013px;" width="4" height="7" viewBox="0 0 4 7"><path d="M0 0V7L4 3.5Z" fill="#a8a8a8"/></svg>
<div style="left:463px;top:1026px;width:1430px;height:26px;background:#f0f0f0;"></div>
<svg style="left:468px;top:1035px;" width="7" height="10" viewBox="0 0 7 10"><path d="M4.2 0L7 0L2.8 5L7 10L4.2 10L0 5Z" fill="#a8c8ee" stroke="#a9b9cc" stroke-width="0.5"/></svg>
<svg style="left:474px;top:1035px;" width="7" height="10" viewBox="0 0 7 10"><path d="M4.2 0L7 0L2.8 5L7 10L4.2 10L0 5Z" fill="#a8c8ee" stroke="#a9b9cc" stroke-width="0.5"/></svg>
<svg style="left:492.5px;top:1035px;" width="7" height="10" viewBox="0 0 7 10"><path d="M4.2 0L7 0L2.8 5L7 10L4.2 10L0 5Z" fill="#a8c8ee" stroke="#a9b9cc" stroke-width="0.5"/></svg>
<span class="t" style="left:512.06px;top:1033.82px;font-size:12.5px;color:#222;">1</span>
<span class="t" style="left:531.50px;top:1033.82px;font-size:12.5px;color:#222;transform:scaleX(1.0063);">of</span>
<span class="t" style="left:552.06px;top:1033.82px;font-size:12.5px;color:#222;">1</span>
<svg style="left:574px;top:1035px;" width="7" height="10" viewBox="0 0 7 10"><path d="M0 0L2.8 0L7 5L2.8 10L0 10L4.2 5Z" fill="#a8c8ee" stroke="#a9b9cc" stroke-width="0.5"/></svg>
<svg style="left:594px;top:1035px;" width="7" height="10" viewBox="0 0 7 10"><path d="M0 0L2.8 0L7 5L2.8 10L0 10L4.2 5Z" fill="#a8c8ee" stroke="#a9b9cc" stroke-width="0.5"/></svg>
<svg style="left:600px;top:1035px;" width="7" height="10" viewBox="0 0 7 10"><path d="M0 0L2.8 0L7 5L2.8 10L0 10L4.2 5Z" fill="#a8c8ee" stroke="#a9b9cc" stroke-width="0.5"/></svg>
<svg style="left:618px;top:1033px;" width="14" height="14" viewBox="0 0 14 14"><path d="M5.7 0.5H8.3V5.7H13.5V8.3H8.3V13.5H5.7V8.3H0.5V5.7H5.7Z" fill="#80c894" stroke="#1c3024" stroke-width="1"/></svg>
<svg style="left:650px;top:1033px;" width="12" height="13" viewBox="0 0 12 13"><path d="M0.5 0.5L6 5L11.5 0.5L7.5 6.5L11.5 12.5L6 8L0.5 12.5L4.5 6.5Z" fill="#f0a898" stroke="#c8b0a8" stroke-width="0.5"/></svg>
<span class="t" style="left:1669.91px;top:1034.02px;font-size:12.5px;color:#222;transform:scaleX(0.9399);">72%</span>
<div style="left:1709px;top:1038px;width:13px;height:3px;background:#555;"></div>
<div style="left:1737px;top:1037px;width:90px;height:4px;background:#e4e8e8;box-shadow:inset 0 0 0 1px #d4d4d4;"></div>
<svg style="left:1763px;top:1031px;" width="11" height="18" viewBox="0 0 11 18"><path d="M0.5 0.5H10.5V11.5L5.5 17.3L0.5 11.5Z" fill="#f0f0f0" stroke="#a8a8a8"/></svg>
<div style="left:1845px;top:1038px;width:13px;height:3px;background:#555;"></div>
<div style="left:1850px;top:1033px;width:3px;height:13px;background:#555;"></div>
<svg style="left:1870px;top:1033px;" width="14" height="14" viewBox="0 0 14 14"><g fill="#555"><path d="M7 0L8.5 3.5H5.5Z"/><path d="M7 14L8.5 10.5H5.5Z"/><path d="M0 7L3.5 5.5V8.5Z"/><path d="M14 7L10.5 5.5V8.5Z"/><rect x="6.5" y="2" width="1" height="3"/><rect x="6.5" y="9" width="1" height="3"/><rect x="2" y="6.5" width="3" height="1"/><rect x="9" y="6.5" width="3" height="1"/></g></svg>
<div style="left:1896px;top:163.5px;width:21px;height:891.5px;background:#efefef;"></div>
<svg style="left:1901px;top:170px;" width="15" height="16" viewBox="0 0 15 16"><rect x="0.5" y="3.5" width="13" height="12" fill="#d4eef6" stroke="#222" stroke-width="1"/><path d="M0.5 5.5H13.5" stroke="#222" stroke-width="1"/><rect x="2.5" y="7.5" width="3" height="6" fill="#fff" stroke="#222" stroke-width="1"/><rect x="7.5" y="7.5" width="2" height="2" fill="#fff" stroke="#222" stroke-width="1"/><path d="M7 11.5H10M7 13.5H10" stroke="#222" stroke-width="0.8" stroke-dasharray="1 1"/><path d="M11.2 15.5V6.2L9.8 4.4A2.6 2.6 0 0 1 12.6 1L11.8 2.8L13.4 3.6L14.4 2A2.6 2.6 0 0 1 13.4 6.2V15.5Z" fill="#fff" stroke="#222" stroke-width="0.8"/></svg>
<span class="t" style="left:1912.6px;top:189px;font-size:12.5px;color:#222;transform-origin:0 0;transform:rotate(90deg) scaleX(0.92);">Tools</span>
<svg style="left:1901px;top:147px;" width="8" height="5" viewBox="0 0 8 5"><path d="M0.7 4.6L4 1.2L7.3 4.6" stroke="#666" stroke-width="1.5" fill="none"/></svg>
</div></body></html>
